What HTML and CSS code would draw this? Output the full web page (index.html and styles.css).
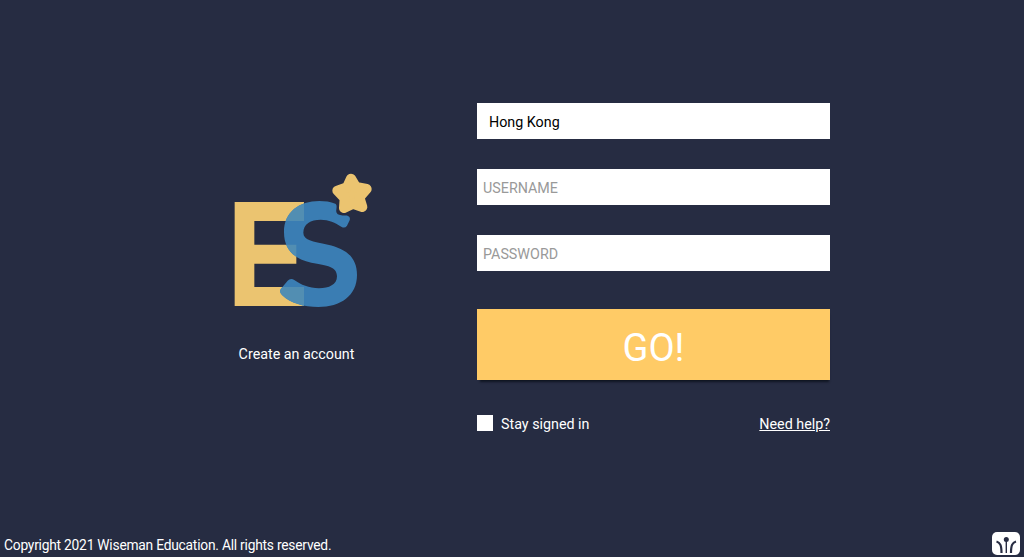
FILE: index.html
```html
<!DOCTYPE html>
<html lang="en">

<head>
    <meta charset="UTF-8">
    <meta name="viewport" content="width=device-width, initial-scale=1.0">
    <title>Login</title>
    <link rel="stylesheet" href="styles.css">
</head>

<body>
    <main class="login">
        <div class="brand">
            <svg class="logo" viewBox="0 0 480 450">
                <path fill="#ebc470" d="M32 114H240V171H91V242H217V299H91V369H240V426H32Z" />
                <path fill="#3a7db3" d="M334 119C320 113 302 111 286 111C225 111 180 145 180 204C180 262 217 287 262 296C310 304 339 308 339 337C339 362 315 373 285 373C255 373 230 362 212 349Q200 341 191 350L171 374Q164 384 174 393C200 418 240 429 283 429C350 429 399 395 399 333C399 275 360 253 312 242C265 232 238 228 238 206C238 180 260 167 290 167C315 167 333 176 353 189Q363 194 369 185L377 169Q380 159 372 156C366 153 361 156 352 154C340 152 335 146 337 137C338 128 339 122 334 119Z" />
                <!-- overlap of the two letters -->
                <clipPath id="s">
                    <path d="M334 119C320 113 302 111 286 111C225 111 180 145 180 204C180 262 217 287 262 296C310 304 339 308 339 337C339 362 315 373 285 373C255 373 230 362 212 349Q200 341 191 350L171 374Q164 384 174 393C200 418 240 429 283 429C350 429 399 395 399 333Z" />
                </clipPath>
                <path class="overlap" clip-path="url(#s)" d="M150 114H240V171H150ZM150 242H217V299H150ZM150 369H240V426H150Z" />
                <path class="star" d="M381 44L396 69L428 75L406 100L415 129L387 119L360 132L362 103L340 80L369 70Z" />
            </svg>
            <a class="create">Create an account</a>
        </div>
        <form class="form">
            <div class="field region">Hong Kong</div>
            <input class="field" type="text" placeholder="USERNAME">
            <input class="field" type="password" placeholder="PASSWORD">
            <button class="go" type="button">GO!</button>
            <div class="options">
                <label class="stay"><span class="box"></span>Stay signed in</label>
                <a class="help">Need help?</a>
            </div>
        </form>
    </main>
    <footer class="footer">
        <span class="copyright">Copyright 2021 Wiseman Education. All rights reserved.</span>
        <svg class="badge" viewBox="0 0 28 23">
            <rect width="28" height="23" rx="5" fill="#fff" />
            <g fill="none" stroke="#272c42">
                <path stroke-width="2.200" d="M4.500 9.500C8 10.500 9.500 13 9.500 21M24 9.500C20.500 10.500 19 13 19 21" />
                <path stroke-width="1.400" d="M14.300 8V21" />
            </g>
            <circle cx="14.300" cy="7.500" r="2.500" fill="#272c42" />
        </svg>
    </footer>
</body>

</html>
```

FILE: styles.css
```css
* {
    box-sizing: border-box;
}

body {
    margin: 0;
    height: 557px;
    display: flex;
    flex-direction: column;
    justify-content: space-between;
    background-color: #262c42;
    color: white;
    font-family: Roboto, sans-serif;
    font-size: 14.3px;
    overflow: hidden;
}

.login {
    display: grid;
    grid-template-columns: 361px 353px;
    padding: 103px 0 0 116px;
}

.brand {
    display: flex;
    flex-direction: column;
    align-items: center;
    padding-top: 61px;
}

.logo {
    width: 160px;
    height: 150px;
    margin-left: 15px;
}

.overlap {
    fill: #528eb2;
}

.star {
    fill: #ebc470;
    stroke: #ebc470;
    stroke-width: 30;
    stroke-linejoin: round;
}

.create {
    margin-top: 31px;
    line-height: 18px;
}

.form {
    display: flex;
    flex-direction: column;
}

.field {
    height: 36px;
    margin: 0 0 30px;
    padding: 2px 6px 0;
    border: 0;
    background-color: white;
    color: black;
    font: inherit;
    line-height: 34px;
}

.field::placeholder {
    color: #999;
}

.region {
    padding-left: 12px;
}

.go {
    height: 71px;
    margin-top: 8px;
    padding: 6px 0 0;
    border: 0;
    background-color: #ffcb66;
    box-shadow: 1px 4px 2px -2px #101522;
    color: white;
    font-family: inherit;
    font-size: 38px;
}

.options {
    display: flex;
    justify-content: space-between;
    align-items: flex-start;
    margin-top: 35px;
    line-height: 19px;
}

.stay {
    display: flex;
}

.box {
    width: 16px;
    height: 16px;
    margin-right: 8px;
    background-color: white;
}

.help {
    text-decoration: underline;
}

.footer {
    display: flex;
    justify-content: space-between;
    align-items: flex-end;
    padding: 0 4px 1px;
}

.copyright {
    font-size: 13.8px;
    letter-spacing: -0.23px;
    line-height: 22px;
}

.badge {
    width: 28px;
    height: 23px;
    margin-bottom: 1px;
}
```
